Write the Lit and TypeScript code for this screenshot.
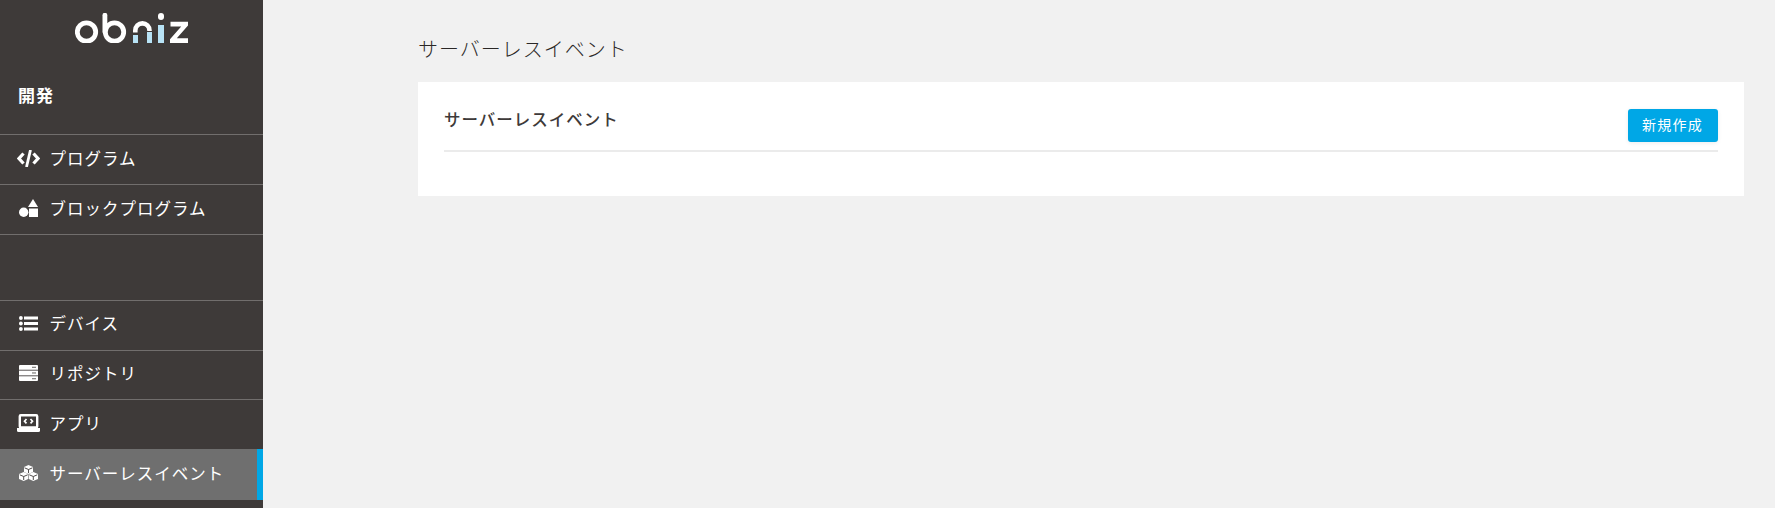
import { LitElement, html, css, svg } from "lit";
import { customElement } from "lit/decorators.js";

const icons = {
  code: svg`<svg viewBox="0 0 23 17" width="23" height="17"><path d="M6.500 3.500 2 8.500l4.500 5M16.500 3.500 21 8.500l-4.500 5" fill="none" stroke="#fff" stroke-width="3.200"/><path d="M13.500 0 9.500 17" fill="none" stroke="#fff" stroke-width="2.800"/></svg>`,
  shapes: svg`<svg viewBox="0 0 19 18" width="19" height="18"><circle cx="4.700" cy="13.300" r="4.700" fill="#fff"/><rect x="10" y="9.500" width="9" height="8.500" fill="#fff"/><path d="M14 0 19 8H9Z" fill="#fff"/></svg>`,
  list: svg`<svg viewBox="0 0 19 15" width="19" height="15"><g fill="#fff"><circle cx="1.900" cy="2" r="1.900"/><circle cx="1.900" cy="7.500" r="1.900"/><circle cx="1.900" cy="13" r="1.900"/><rect x="5" y="0.500" width="14" height="3"/><rect x="5" y="6" width="14" height="3"/><rect x="5" y="11.500" width="14" height="3"/></g></svg>`,
  server: svg`<svg viewBox="0 0 19 16" width="19" height="16"><g fill="#fff"><path d="M1 0H18Q19 0 19 1V4.700H0V1Q0 0 1 0Z"/><rect y="5.600" width="19" height="4.800"/><path d="M0 11.300H19V15Q19 16 18 16H1Q0 16 0 15Z"/></g><g fill="#8a8886"><rect x="13" y="1.700" width="4" height="1.300"/><rect x="13" y="7.300" width="4" height="1.300"/><rect x="13" y="13" width="4" height="1.300"/></g></svg>`,
  laptop: svg`<svg viewBox="0 0 23 18" width="23" height="18"><rect x="2.800" y="1.200" width="17.400" height="12.300" rx="1" fill="none" stroke="#fff" stroke-width="2.400"/><path d="M0 14H23V16.500Q23 18 21.500 18H1.500Q0 18 0 16.500Z" fill="#fff"/><path d="M9.500 5 7.500 7.200l2 2.200M13.500 5l2 2.200-2 2.200" fill="none" stroke="#fff" stroke-width="1.700"/></svg>`,
  cubes: svg`<svg viewBox="0 0 19 16" width="19" height="16"><g fill="#fff"><path d="M9.500 0 14 2V7L9.500 9 5 7V2Z"/><path d="M4.700 7 9.200 9V14L4.700 16 0 14V9Z"/><path d="M14.300 7 19 9V14L14.300 16 9.800 14V9Z"/></g><g fill="none" stroke="#3e3a39" stroke-width="0.900"><path d="M5.500 2.800 9.500 4.500 13.500 2.800M9.500 4.500V8"/><path d="M0.700 9.800 4.700 11.500 8.700 9.800M4.700 11.500V15"/><path d="M10.300 9.800 14.300 11.500 18.300 9.800M14.300 11.500V15"/></g></svg>`,
};

const logo = svg`<svg viewBox="0 0 113 30" width="113" height="30">
  <circle cx="11.500" cy="19" r="9.200" fill="none" stroke="#fff" stroke-width="4.800"/>
  <circle cx="39.500" cy="19" r="9.200" fill="none" stroke="#fff" stroke-width="4.800"/>
  <path d="M29.900 2.200V19" fill="none" stroke="#fff" stroke-width="4.800" stroke-linecap="round"/>
  <path d="M60.300 19.500V17.500A7.100 7.100 0 0 1 74.500 17.500V18" fill="none" stroke="#fff" stroke-width="4.600"/>
  <rect x="58" y="22" width="5" height="8" fill="#b8e3f6"/>
  <rect x="72" y="19" width="5" height="11" fill="#b8e3f6"/>
  <rect x="83" y="0" width="6" height="7" rx="3" fill="#fff"/>
  <rect x="83" y="12" width="6" height="18" fill="#b8e3f6"/>
  <path d="M95.500 8.800H113V12.500L101.800 25.300H113V30H95V26.300L106.200 13.500H95.500Z" fill="#fff"/>
</svg>`;

@customElement("app-root")
export class AppRoot extends LitElement {
  static styles = css`
    :host {
      display: block;
      height: 508px;
      overflow: hidden;
      background: #f1f1f1;
      font-family: "Noto Sans CJK JP", "Noto Sans", sans-serif;
      letter-spacing: 1px;
    }
    .layout { display: flex; height: 100%; }
    .side {
      width: 263px;
      flex: none;
      background: #3e3a39;
      color: #fff;
      display: flex;
      flex-direction: column;
    }
    .logo { display: flex; height: 46px; padding: 13px 0 0 75px; box-sizing: border-box; }
    .section {
      height: 88px;
      padding: 37px 0 0 18px;
      box-sizing: border-box;
      font-size: 17px;
      font-weight: 700;
      line-height: 24px;
    }
    .group { display: flex; flex-direction: column; }
    .top { margin-bottom: 65px; }
    .item {
      display: flex;
      align-items: center;
      height: 50px;
      box-sizing: border-box;
      border-top: 1px solid #716e6d;
      font-size: 16.500px;
    }
    .item.last { height: 51px; border-bottom: 1px solid #716e6d; }
    .item.plain { height: 49.500px; }
    .icon { width: 57.500px; flex: none; display: flex; justify-content: center; padding: 0 0 3px 0; margin-right: -8px; box-sizing: border-box; }
    .label { padding-bottom: 4px; }
    .item.active {
      background: #6f6f6f;
      border-top: none;
      border-right: 6px solid #00a7e6;
      height: 51px;
    }
    .main { flex: 1; padding: 29px 31px 0 155px; box-sizing: border-box; color: #3e3a39; }
    h1 { margin: 0; font-size: 20px; font-weight: 300; line-height: 40px; height: 53px; color: #2a2726; }
    .card { background: #fff; padding: 27px 26px 0; height: 114px; box-sizing: border-box; }
    .head {
      display: flex;
      justify-content: space-between;
      align-items: flex-start;
      height: 41px;
      border-bottom: 2px solid #ebebeb;
    }
    h2 { margin: -2px 0 0; font-size: 16.500px; font-weight: 500; line-height: 24px; }
    button {
      width: 90px;
      height: 33px;
      border: none;
      border-radius: 3px;
      background: #00a7e6;
      color: #fff;
      font: inherit;
      font-size: 14px;
      letter-spacing: 1.200px;
      padding: 0 1px 4px 0;
      box-shadow: 0 1px 4px rgba(0, 0, 0, 0.08);
    }
  `;

  row(icon: unknown, label: string, cls = "") {
    return html`<div class="item ${cls}"><span class="icon">${icon}</span><span class="label">${label}</span></div>`;
  }

  render() {
    return html`<div class="layout">
      <nav class="side">
        <div class="logo">${logo}</div>
        <div class="section">開発</div>
        <div class="group top">
          ${this.row(icons.code, "プログラム")}
          ${this.row(icons.shapes, "ブロックプログラム", "last")}
        </div>
        <div class="group">
          ${this.row(icons.list, "デバイス", "plain")}
          ${this.row(icons.server, "リポジトリ", "plain")}
          ${this.row(icons.laptop, "アプリ")}
          ${this.row(icons.cubes, "サーバーレスイベント", "active")}
        </div>
      </nav>
      <main class="main">
        <h1>サーバーレスイベント</h1>
        <section class="card">
          <div class="head">
            <h2>サーバーレスイベント</h2>
            <button>新規作成</button>
          </div>
        </section>
      </main>
    </div>`;
  }
}
